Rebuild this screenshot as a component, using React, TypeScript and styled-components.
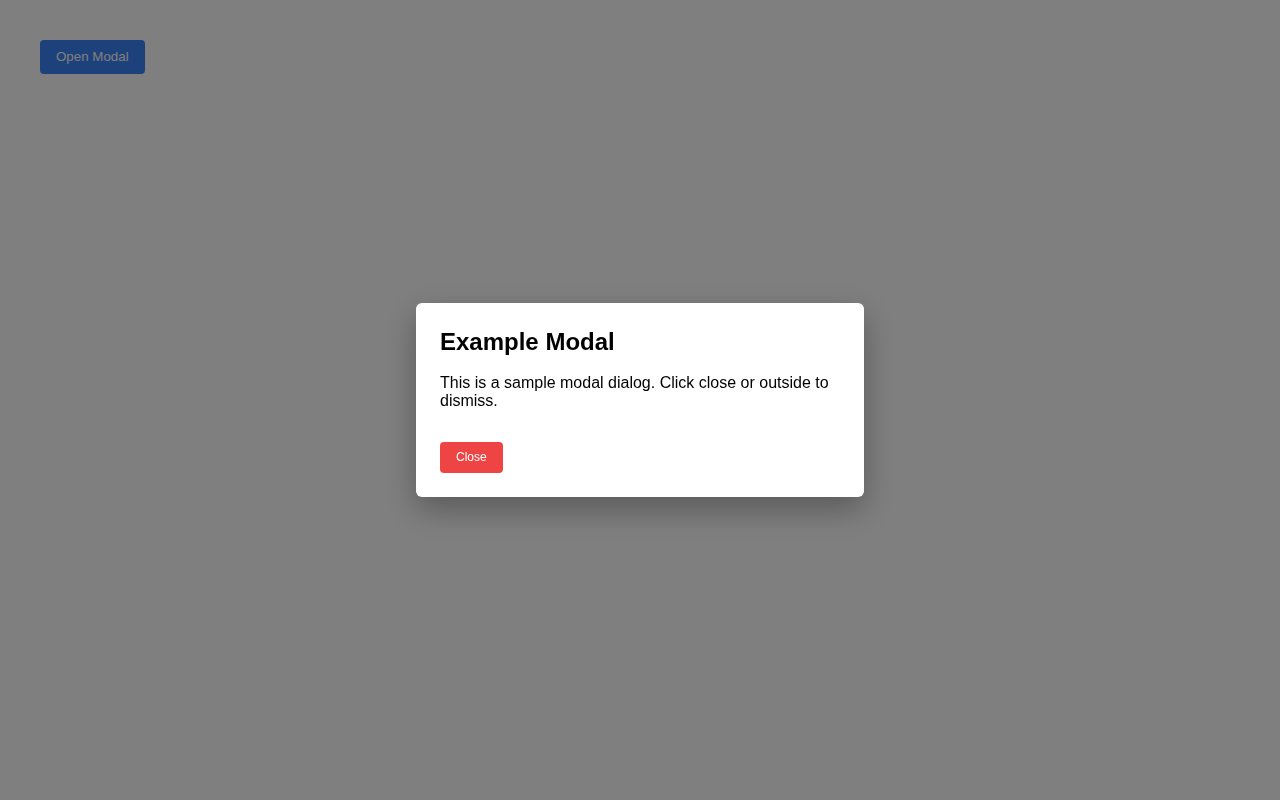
import { useState } from "react";
import styled, { createGlobalStyle } from "styled-components";

const GlobalStyle = createGlobalStyle`
  html, body {
    margin: 0;
    padding: 0;
    background: #ffffff;
    font-family: "Liberation Sans", Arial, sans-serif;
  }
  * {
    box-sizing: border-box;
  }
`;

const App: React.FC = () => {
  const [open, setOpen] = useState<boolean>(true);

  return (
    <>
      <GlobalStyle />
      <Page>
        <Button $tone="blue" $size={13.33} onClick={() => setOpen(true)}>
          Open Modal
        </Button>
      </Page>
      {open ? (
        <Overlay onClick={() => setOpen(false)}>
          <Dialog onClick={(e) => e.stopPropagation()}>
            <Title>Example Modal</Title>
            <Body>
              This is a sample modal dialog. Click close or outside to dismiss.
            </Body>
            <Actions>
              <Button $tone="red" $size={12} onClick={() => setOpen(false)}>
                Close
              </Button>
            </Actions>
          </Dialog>
        </Overlay>
      ) : null}
    </>
  );
};

const Page = styled.main`
  min-height: 800px;
  padding: 40px;
`;

const Button = styled.button<{ $tone: "blue" | "red"; $size: number }>`
  display: inline-block;
  border: none;
  border-radius: 4px;
  padding: ${(p) => (p.$tone === "blue" ? "9px 16px" : "8px 16px")};
  line-height: ${(p) => (p.$tone === "blue" ? "16px" : "15px")};
  font-family: "Liberation Sans", Arial, sans-serif;
  font-size: ${(p) => p.$size}px;
  color: #ffffff;
  background-color: ${(p) => (p.$tone === "blue" ? "#3b82f6" : "#ef4444")};
  cursor: pointer;
`;

const Overlay = styled.div`
  position: fixed;
  inset: 0;
  background: rgba(0, 0, 0, 0.5);
  display: flex;
  align-items: center;
  justify-content: center;
`;

const Dialog = styled.div`
  width: 448px;
  padding: 24px;
  background: #ffffff;
  border-radius: 6px;
  box-shadow: 0 12px 32px rgba(0, 0, 0, 0.3);
`;

const Title = styled.h2`
  margin: 0 0 18px;
  font-size: 24px;
  line-height: 29px;
  font-weight: 700;
  color: #000000;
`;

const Body = styled.p`
  margin: 0 0 32px;
  font-size: 16px;
  line-height: 18px;
  color: #000000;
`;

const Actions = styled.div`
  display: flex;
`;

export default App;
